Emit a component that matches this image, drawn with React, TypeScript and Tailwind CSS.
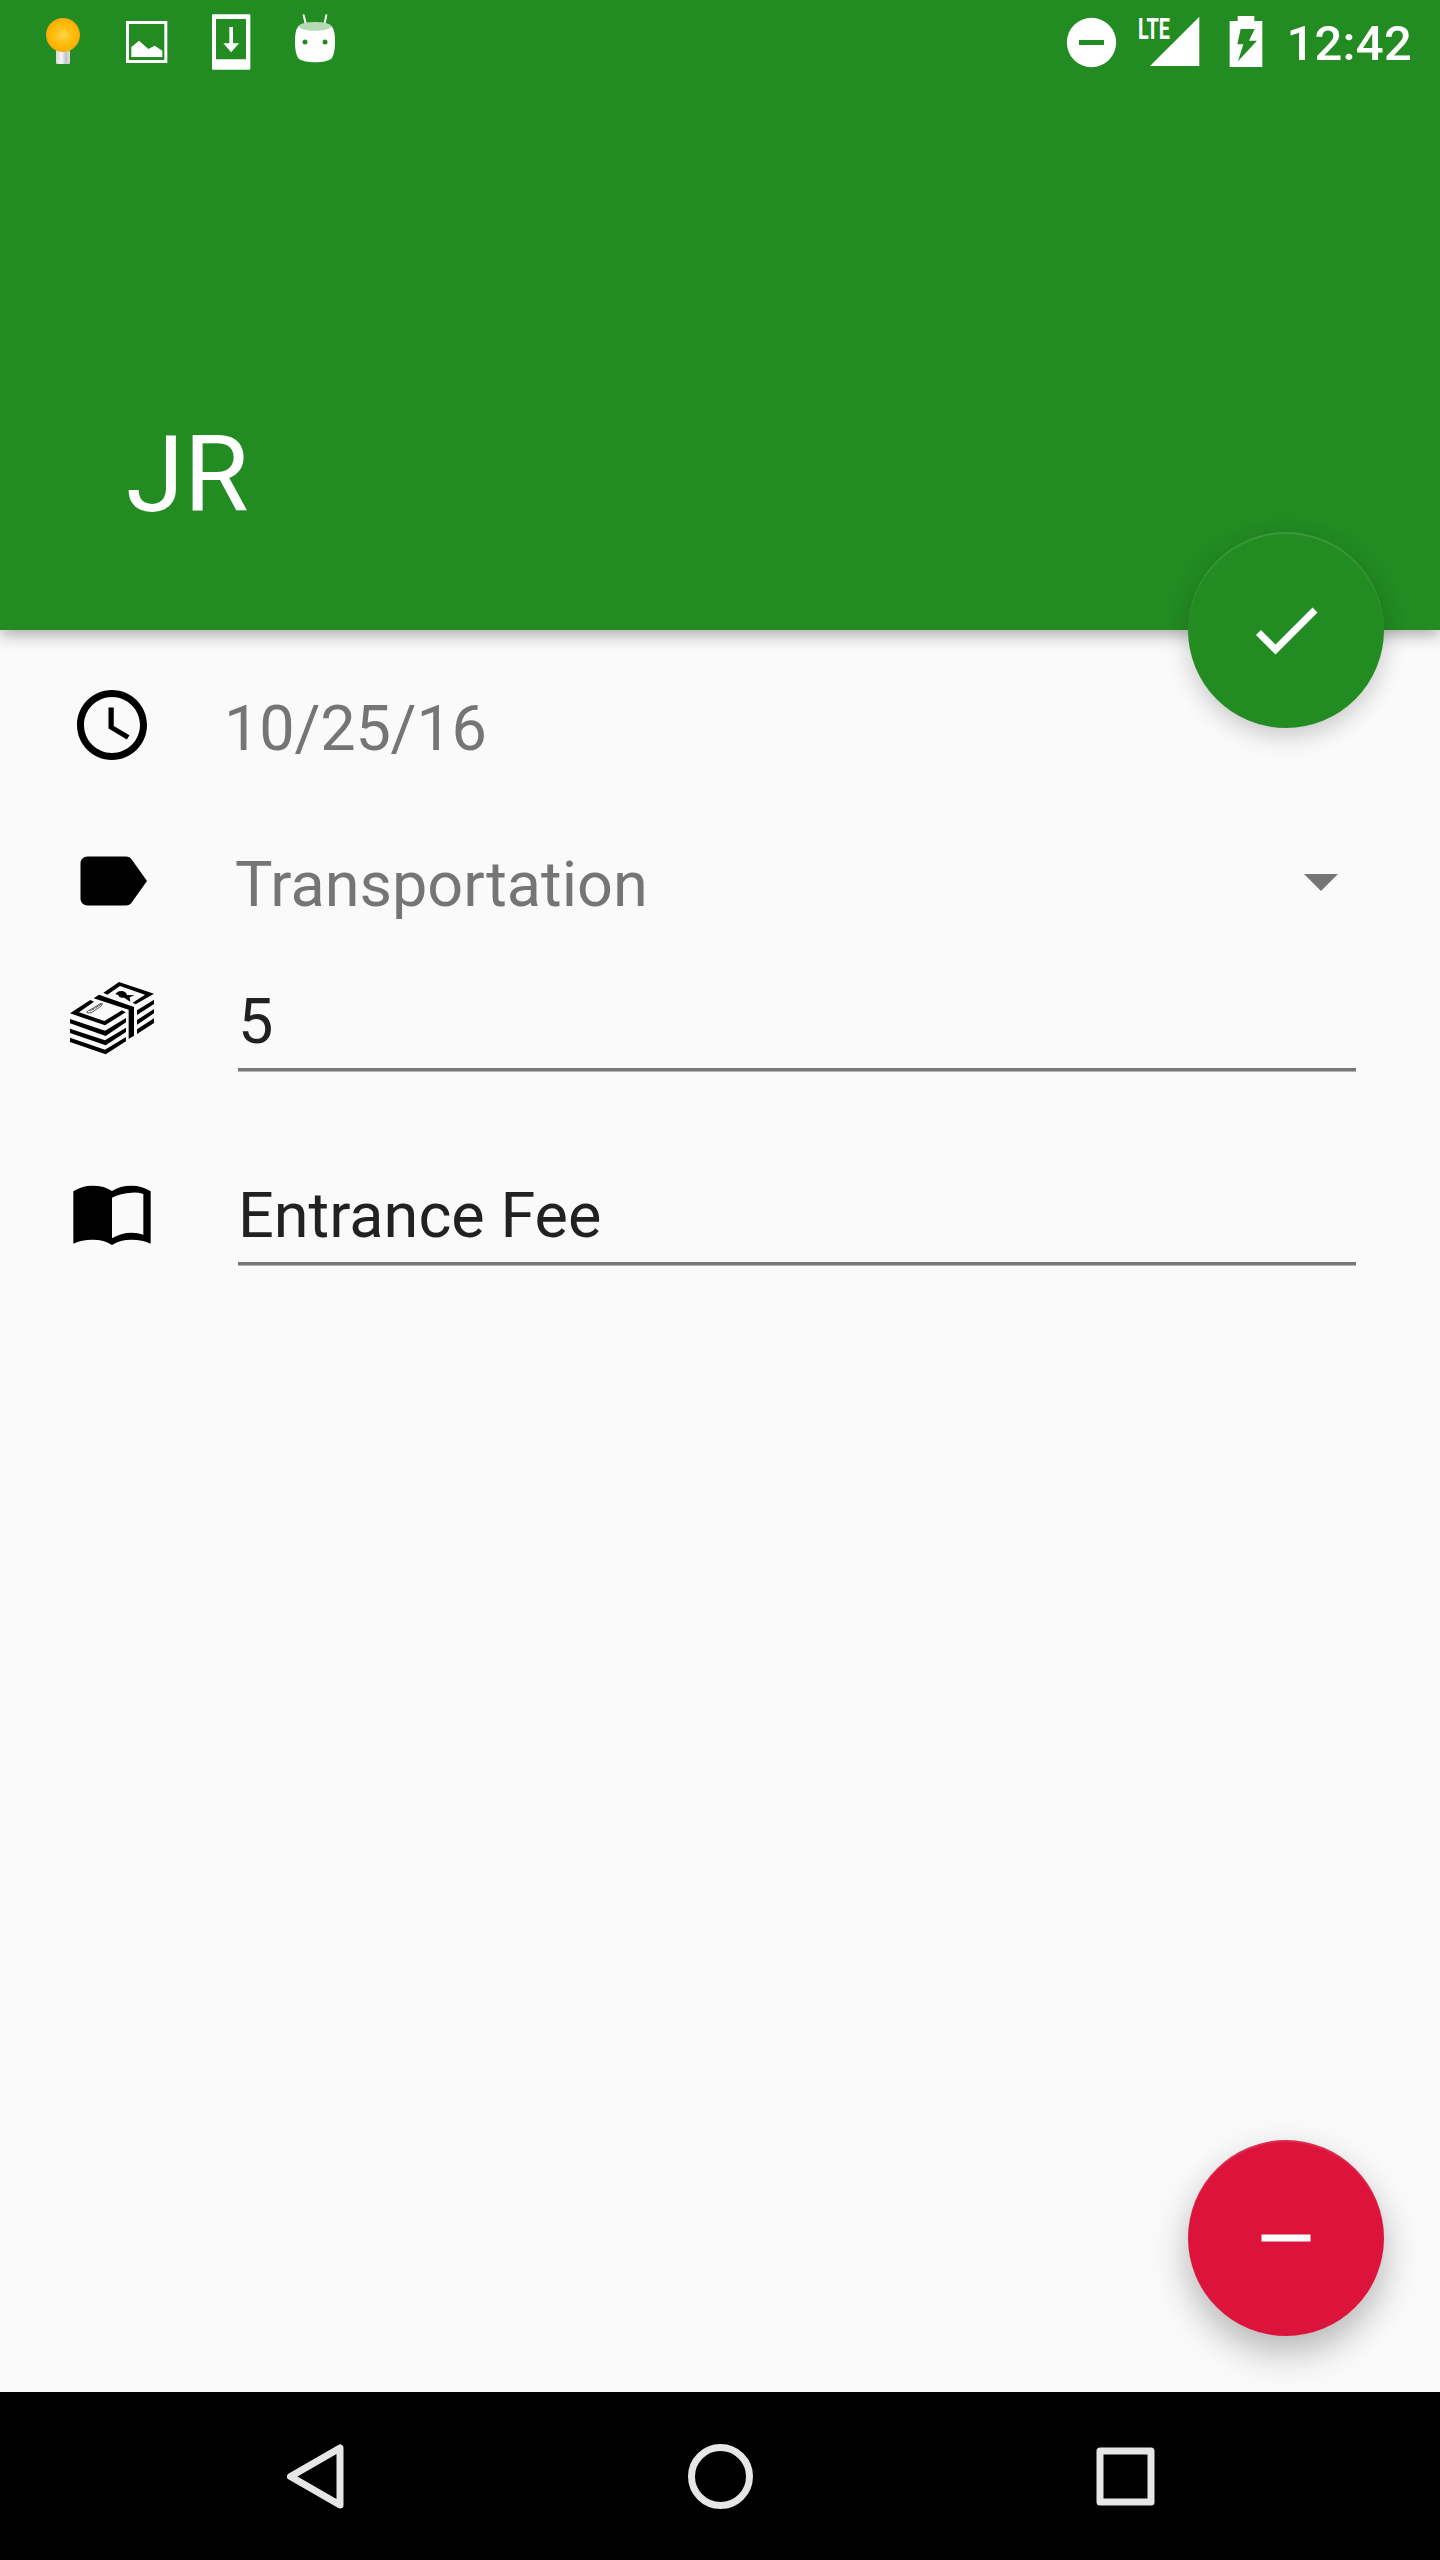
import { ReactNode } from "react";
import { MdAccessTime, MdCheck, MdLabel, MdRemove } from "react-icons/md";

function BulbIcon() {
    return (
        <svg viewBox="-27 0 252 252" className="size-[84px]">
            <defs>
                <radialGradient id="bulb" cx="0.5" cy="0.5" r="0.5">
                    <stop offset="0" stopColor="#ffd84f" />
                    <stop offset="0.4" stopColor="#ffc21c" />
                    <stop offset="0.85" stopColor="#ffb300" />
                    <stop offset="1" stopColor="#f0a818" />
                </radialGradient>
                <linearGradient id="socket">
                    <stop offset="0" stopColor="#d8d8d8" />
                    <stop offset="0.4" stopColor="#f5f5f5" />
                    <stop offset="0.7" stopColor="#c4c4c8" />
                    <stop offset="1" stopColor="#dedede" />
                </linearGradient>
            </defs>
            <rect x="78" y="146" width="42" height="46" rx="4" fill="url(#socket)" />
            <circle cx="99" cy="105" r="51" fill="url(#bulb)" />
        </svg>
    );
}

function ImageIcon() {
    return (
        <svg viewBox="225 0 252 252" className="size-[84px]">
            <rect x="292.5" y="67.500" width="115" height="117" fill="none" stroke="#fff" strokeWidth="9" />
            <path d="M304 171V141L327 122L355 147L374 137L397 152V171Z" fill="#fff" />
        </svg>
    );
}

function DownloadIcon() {
    return (
        <svg viewBox="477 0 252 252" className="size-[84px]">
            <path
                d="M549 43H658Q661 43 661 46V206Q661 209 658 209H549Q546 209 546 206V46Q546 43 549 43ZM558 57V178H648V57Z"
                fill="#fff"
                fillRule="evenodd"
            />
            <path d="M598 81H609V130H627L603.500 157L580 130H598Z" fill="#fff" />
        </svg>
    );
}

function AndroidIcon() {
    return (
        <svg viewBox="729 0 252 252" className="size-[84px]">
            <path d="M821 46L829 78M889 46L882 78" stroke="#fff" strokeWidth="6" strokeLinecap="round" />
            <path
                d="M806 78C796 88 795 108 795 126C795 150 799 166 805 175C814 184 836 187 855 187C874 187 896 184 905 175C911 166 915 150 915 126C915 108 914 88 904 78Z"
                fill="#fff"
            />
            <ellipse cx="855" cy="79" rx="49" ry="13" fill="#b5dab5" />
            <circle cx="825" cy="126" r="7.500" fill="#228b22" />
            <circle cx="885" cy="126" r="7.500" fill="#228b22" />
        </svg>
    );
}

function StatusBar() {
    return (
        <div className="flex h-[84px] pl-[21px]">
            <BulbIcon />
            <ImageIcon />
            <DownloadIcon />
            <AndroidIcon />
            <div className="ml-auto flex pr-[28px]">
                {/* Do not disturb */}
                <svg viewBox="60 0 200 252" className="h-[84px] w-[66.67px]">
                    <circle cx="154.500" cy="127.500" r="74" fill="#fff" />
                    <rect x="117" y="120" width="75" height="15" fill="#228b22" />
                </svg>
                {/* Signal */}
                <svg viewBox="260 0 260 252" className="h-[84px] w-[86.67px]">
                    <path d="M477 50V198H329Z" fill="#fff" />
                    <text
                        x="293"
                        y="117"
                        textLength="96"
                        lengthAdjust="spacingAndGlyphs"
                        fill="#fff"
                        fontSize="88"
                        className="font-[Roboto] font-bold"
                    >
                        LTE
                    </text>
                </svg>
                {/* Battery */}
                <svg viewBox="520 0 170 252" className="h-[84px] w-[56.67px]">
                    <path d="M591 48H641V63H665V201H567V63H591Z" fill="#fff" />
                    <path d="M600 87H642L625 122H649L592 184L608 133H590Z" fill="#228b22" />
                </svg>
                <span className="ml-[16px] mt-[15px] text-[49px] font-medium leading-[58px] tracking-[0.25px]">12:42</span>
            </div>
        </div>
    );
}

function MoneyIcon() {
    return (
        <svg viewBox="60 48 252 252" className="size-[84px]">
            {/* Far end of the top bill */}
            <path d="M160 98L207 66L312 101L257 133L248 128L285 104L210 78L172 104Z" />
            <path d="M196 103Q202 92 217 93Q228 95 231 105L253 106L239 112L241 125L222 113Q207 115 205 105Z" />
            {/* Band */}
            <path d="M131 115L147 104L252 141V227L236 237V149Z" />
            {/* Near end of the top bill */}
            <path d="M60 160L121 120L132 125L87 157L163 183L216 151L227 157L165 196Z" />
            <path d="M110 157Q116 150 120 150L151 131L157 131L155 137L124 158L114 159Z" fill="none" stroke="#000" strokeWidth="2" />
            <path d="M121 153L153 133" stroke="#000" strokeWidth="3" strokeDasharray="3 2" />
            {/* Stacked edges */}
            <path d="M60 177L165 212L228 174V187L167 228L60 190Z" />
            <path d="M60 206L165 241L228 203V216L167 256L60 219Z" />
            <path d="M60 233L165 269L228 231V244L167 283L60 246Z" />
            <path d="M261 151L312 119V132L261 165Z" />
            <path d="M261 180L312 147V160L261 194Z" />
            <path d="M261 208L312 175V189L261 222Z" />
        </svg>
    );
}

function BookIcon() {
    return (
        <svg viewBox="30 9 252 252" className="size-[84px]">
            <path
                d="M40 64Q64 47 98 47Q133 47 156 63Q180 47 214 47Q248 47 272 64V221Q248 209 214 209Q180 209 156 225Q133 209 98 209Q64 209 40 221ZM156 83V205Q182 188 216 188Q234 188 250 194V72Q234 67 216 68Q182 69 156 83Z"
                fillRule="evenodd"
            />
        </svg>
    );
}

function Row({ icon, className, children }: { icon: ReactNode; className: string; children: ReactNode }) {
    return (
        <div className={`flex pl-[70px] ${className}`}>
            <div className="flex w-[84px] shrink-0 items-center">{icon}</div>
            {children}
        </div>
    );
}

function Field({ value, className }: { value: string; className: string }) {
    return (
        <div className={`ml-[84px] mr-[84px] flex-1 self-start border-b-3 border-[#777] pb-[9px] text-[#212121] shadow-[0_1px_0_#b5b5b5] ${className}`}>
            {value}
        </div>
    );
}

export default function App() {
    return (
        <div className="flex h-[2560px] w-[1440px] flex-col bg-[#fafafa] font-[Roboto,sans-serif] text-[63px] leading-[74px]">
            {/* Header */}
            <header className="relative flex h-[630px] shrink-0 flex-col bg-[#228b22] text-white shadow-[0_4px_16px_rgba(0,0,0,0.35)]">
                <StatusBar />
                <h1 className="mb-[92px] ml-[126px] mt-auto text-[105px] leading-[124px]">JR</h1>
                <button className="absolute -bottom-[98px] right-[56px] flex size-[196px] items-center justify-center rounded-full bg-[#228b22] shadow-[0_8px_24px_rgba(0,0,0,0.2),inset_0_2px_1px_rgba(255,255,255,0.12)]">
                    <MdCheck className="size-[84px]" />
                </button>
            </header>

            {/* Expense details */}
            <main className="flex flex-1 flex-col">
                <Row className="h-[190px]" icon={<MdAccessTime className="size-[84px]" />}>
                    <span className="ml-[70px] mt-[62px] tracking-[-0.2px] text-[#757575]">10/25/16</span>
                </Row>
                <Row className="h-[122px]" icon={<MdLabel className="size-[84px]" />}>
                    <span className="ml-[81px] mt-[28px] text-[#757575]">Transportation</span>
                    <svg viewBox="0 0 34 17" className="ml-auto mr-[102px] mt-[54px] h-[17px] w-[34px]">
                        <path d="M0 0H34L17 17Z" fill="#757575" />
                    </svg>
                </Row>
                <Row className="h-[152px]" icon={<MoneyIcon />}>
                    <Field value="5" className="mt-[43px]" />
                </Row>
                <Row className="h-[242px]" icon={<BookIcon />}>
                    <Field value="Entrance Fee" className="mt-[85px]" />
                </Row>

                <button className="mb-[56px] ml-auto mr-[56px] mt-auto flex size-[196px] items-center justify-center rounded-full bg-[#dc143c] text-white shadow-[0_16px_36px_rgba(0,0,0,0.28),inset_0_2px_1px_rgba(255,255,255,0.1)]">
                    <MdRemove className="size-[84px]" />
                </button>
            </main>

            {/* Navigation bar */}
            <nav className="z-10 flex h-[168px] shrink-0 items-center bg-black pl-[287px] text-[#e6e6e6]">
                <svg viewBox="287 52 57 65" className="h-[65px] w-[57px]" fill="none" stroke="currentColor" strokeWidth="7" strokeLinejoin="round">
                    <path d="M340 56V113L290.500 84.500Z" />
                </svg>
                <svg viewBox="688 52 65 65" className="ml-[344px] size-[65px]" fill="none" stroke="currentColor" strokeWidth="7">
                    <circle cx="720.500" cy="84.500" r="29" />
                </svg>
                <svg viewBox="1096 55 59 59" className="ml-[343px] size-[59px]" fill="none" stroke="currentColor" strokeWidth="7" strokeLinejoin="round">
                    <rect x="1100" y="59" width="51" height="51" />
                </svg>
            </nav>
        </div>
    );
}
